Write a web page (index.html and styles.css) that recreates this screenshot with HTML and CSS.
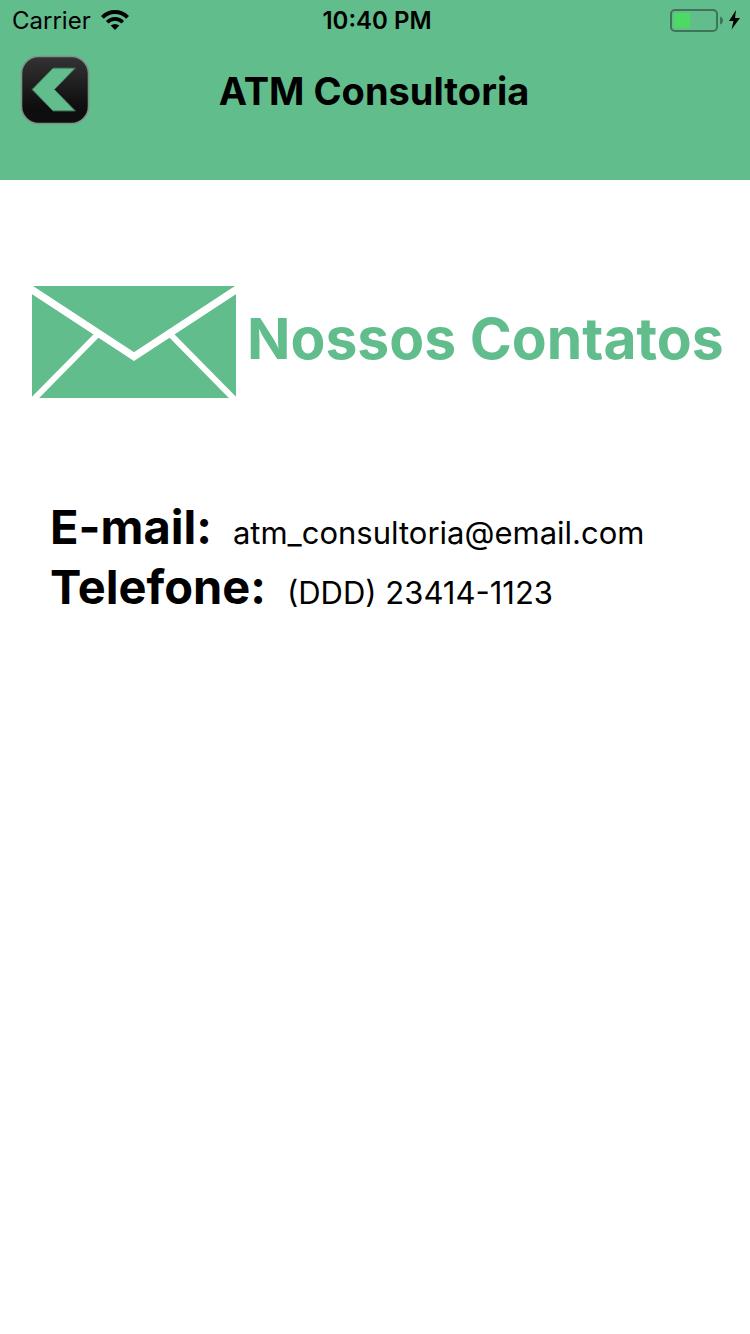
FILE: index.html
```html
<!DOCTYPE html>
<html lang="pt-BR">
<head>
<meta charset="utf-8">
<meta name="viewport" content="width=device-width, initial-scale=1">
<title>ATM Consultoria</title>
<link rel="stylesheet" href="styles.css">
</head>
<body>
<header class="header">
  <div class="status">
    <div class="status-left">
      <span class="carrier">Carrier</span>
      <svg class="wifi" width="28" height="20" viewBox="0 0 28 20" aria-hidden="true">
        <g fill="none" stroke="#000">
          <path d="M1.4 7.4C8.5 .2 19.500 .2 26.600 7.400" stroke-width="3.900"/>
          <path d="M6.200 12.200C10.600 7.800 17.400 7.800 21.800 12.200" stroke-width="3.700"/>
        </g>
        <path d="M14 20L9.700 15.600Q14 12.200 18.300 15.600Z"/>
      </svg>
    </div>
    <time class="clock">10:40 PM</time>
    <div class="status-right">
      <svg width="72" height="24" viewBox="0 -1 72 24" aria-hidden="true">
        <rect x="1" y="1" width="46" height="21" rx="4" fill="none" stroke="#3f745a" stroke-width="2"/>
        <rect x="4" y="4" width="16" height="15" rx="1" fill="#4cd964"/>
        <path d="M50 7.500Q53 8.500 53 11.500T50 15.500Z" fill="#3f745a"/>
        <path d="M66 1L59 12H63.500L61.500 20.500L70 9H65Z"/>
      </svg>
    </div>
  </div>
  <nav class="nav">
    <button class="back" type="button" aria-label="Voltar">
      <svg width="70" height="70" viewBox="0 0 70 70" aria-hidden="true">
        <defs>
          <linearGradient id="shade" x1="0" y1="0" x2="0" y2="1">
            <stop offset="0" stop-color="#333"/>
            <stop offset=".75" stop-color="#0e0e0e"/>
            <stop offset="1" stop-color="#0e0e0e"/>
          </linearGradient>
        </defs>
        <rect x="1.500" y="1.500" width="67" height="67" rx="17" fill="url(#shade)" stroke="#7c9487" stroke-width="1.600"/>
        <path d="M33 13H55.500L34.500 34.500L55.500 56H33L12 34.500Z" fill="#62bd8d" stroke="#3d5b4c" stroke-width="1"/>
      </svg>
    </button>
    <h1 class="title">ATM Consultoria</h1>
  </nav>
</header>
<main class="content">
  <div class="heading">
    <svg class="envelope" width="206" height="114" viewBox="0 0 206 114" aria-hidden="true">
      <rect x="1" y="1" width="204" height="112" fill="#62bd8d"/>
      <g fill="none" stroke="#fff">
        <path d="M-4 1.500L103 71.500L210 1.500" stroke-width="7.400"/>
        <path d="M67 49L1 116M139 49L205 116" stroke-width="6"/>
      </g>
    </svg>
    <h2 class="heading-text">Nossos Contatos</h2>
  </div>
  <dl class="contacts">
    <div class="contact">
      <dt class="label">E-mail:</dt>
      <dd class="value">atm_consultoria@email.com</dd>
    </div>
    <div class="contact">
      <dt class="label">Telefone:</dt>
      <dd class="value">(DDD) 23414-1123</dd>
    </div>
  </dl>
</main>
</body>
</html>
```
FILE: styles.css
```css
* {
  box-sizing: border-box;
}

body {
  margin: 0;
  background: #fff;
  color: #000;
  font-family: Inter, "Liberation Sans", sans-serif;
}

h1, h2, dl, dd {
  margin: 0;
}

svg {
  display: block;
}

.header {
  background: #62bd8d;
  padding-bottom: 55px;
}

.status {
  display: grid;
  grid-template-columns: 1fr auto 1fr;
  align-items: center;
  height: 40px;
  padding: 0 8px 0 12px;
  font-size: 24px;
}

.status-left {
  display: flex;
  align-items: center;
  gap: 10px;
}

.clock {
  font-weight: 600;
}

.status-right {
  display: flex;
  justify-content: flex-end;
}

.nav {
  display: grid;
  grid-template-columns: 70px 1fr 70px;
  align-items: center;
  padding: 15px 22px 0 20px;
}

.back {
  padding: 0;
  border: 0;
  background: none;
}

.title {
  padding-top: 2px;
  text-align: center;
  font-size: 38px;
  line-height: 48px;
  font-weight: 700;
}

.content {
  padding: 105px 24px 0 31px;
}

.heading {
  display: flex;
  align-items: center;
  gap: 10px;
}

.envelope {
  flex: none;
}

.heading-text {
  padding-bottom: 6px;
  color: #62bd8d;
  font-size: 57px;
  line-height: 72px;
  font-weight: 700;
  white-space: nowrap;
}

.contacts {
  padding: 98px 0 0 19px;
}

.contact {
  display: flex;
  align-items: baseline;
  gap: 21px;
}

.label {
  font-size: 47px;
  line-height: 60px;
  font-weight: 700;
}

.value {
  font-size: 31px;
  line-height: 40px;
}
```
